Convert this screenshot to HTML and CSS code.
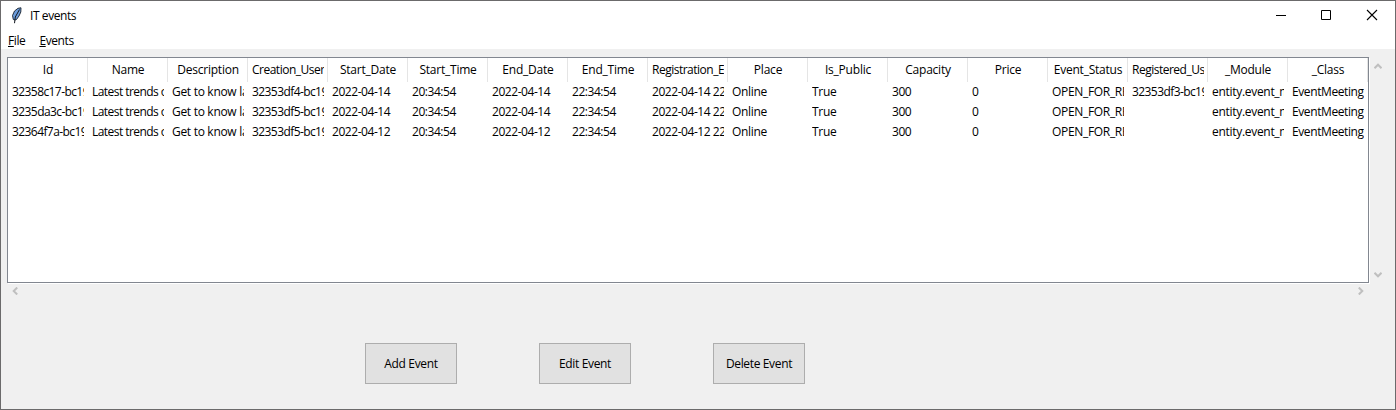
FILE: index.html
```html
<!DOCTYPE html>
<html lang="en">
<head>
<meta charset="utf-8">
<title>IT events</title>
<link rel="stylesheet" href="styles.css">
</head>
<body>
<div class="window">
  <header class="titlebar">
    <svg class="feather" width="12" height="18" viewBox="0 0 12 18"><path d="M2.3 12.5L1.5 8.5 3.5 4 7 1.3 10 .8 9.8 5 8 9 5.5 12.5 4 13z" fill="#6c9cdb" stroke="#19212c" stroke-width=".9"/><path d="M3.5 16.2L4.3 10 8.5 2.5" fill="none" stroke="#10151d" stroke-width="1"/></svg>
    <span class="title">IT events</span>
    <div class="controls">
      <svg width="46" height="29" viewBox="0 0 46 29"><path d="M19 14.5h10" stroke="#000"/></svg>
      <svg width="46" height="29" viewBox="0 0 46 29"><path d="M18.5 9.5h9v9h-9z" fill="none" stroke="#000"/></svg>
      <svg width="46" height="29" viewBox="0 0 46 29"><path d="M18 9l10 10M28 9L18 19" stroke="#000" stroke-width="1.1"/></svg>
    </div>
  </header>
  <nav class="menubar"><span class="file"><u>F</u>ile</span><span class="events"><u>E</u>vents</span></nav>
  <main class="content">
    <div class="tree-area">
      <div class="tree">
        <div class="row head"><span>Id</span><span>Name</span><span>Description</span><span class="long">Creation_User</span><span>Start_Date</span><span>Start_Time</span><span>End_Date</span><span>End_Time</span><span class="long">Registration_End</span><span>Place</span><span>Is_Public</span><span>Capacity</span><span>Price</span><span>Event_Status</span><span class="long">Registered_Users</span><span>_Module</span><span>_Class</span></div>
        <div class="row"><span class="id">32358c17-bc19</span><span class="name">Latest trends on</span><span>Get to know latest</span><span class="id">32353df4-bc19</span><span class="num">2022-04-14</span><span class="num">20:34:54</span><span class="num">2022-04-14</span><span class="num">22:34:54</span><span class="num">2022-04-14 22:34</span><span>Online</span><span>True</span><span class="num">300</span><span>0</span><span class="caps">OPEN_FOR_REG</span><span class="id">32353df3-bc19</span><span>entity.event_meeting</span><span class="cls">EventMeeting</span></div>
        <div class="row"><span class="id">3235da3c-bc19</span><span class="name">Latest trends on</span><span>Get to know latest</span><span class="id">32353df5-bc19</span><span class="num">2022-04-14</span><span class="num">20:34:54</span><span class="num">2022-04-14</span><span class="num">22:34:54</span><span class="num">2022-04-14 22:34</span><span>Online</span><span>True</span><span class="num">300</span><span>0</span><span class="caps">OPEN_FOR_REG</span><span></span><span>entity.event_meeting</span><span class="cls">EventMeeting</span></div>
        <div class="row"><span class="id">32364f7a-bc19</span><span class="name">Latest trends on</span><span>Get to know latest</span><span class="id">32353df5-bc19</span><span class="num">2022-04-12</span><span class="num">20:34:54</span><span class="num">2022-04-12</span><span class="num">22:34:54</span><span class="num">2022-04-12 22:34</span><span>Online</span><span>True</span><span class="num">300</span><span>0</span><span class="caps">OPEN_FOR_REG</span><span></span><span>entity.event_meeting</span><span class="cls">EventMeeting</span></div>
      </div>
      <div class="scroll vertical">
        <svg width="8" height="6" viewBox="0 0 8 6"><path d="M.5 5.2L4 1.7 7.5 5.2"/></svg>
        <svg width="8" height="6" viewBox="0 0 8 6"><path d="M.5 .8L4 4.3 7.5 .8"/></svg>
      </div>
      <div class="scroll horizontal">
        <svg width="6" height="8" viewBox="0 0 6 8"><path d="M5.2 .5L1.7 4 5.2 7.5"/></svg>
        <svg width="6" height="8" viewBox="0 0 6 8"><path d="M.8 .5L4.3 4 .8 7.5"/></svg>
      </div>
    </div>
    <div class="actions"><button class="add">Add Event</button><button class="edit">Edit Event</button><button class="delete">Delete Event</button></div>
  </main>
</div>
</body>
</html>
```
FILE: styles.css
```css
* { box-sizing: border-box; }
body { margin: 0; font: 12px/20px "Open Sans", "Noto Sans", sans-serif; color: #000; letter-spacing: -0.3px; }
.window { width: 1396px; height: 410px; border: 1px solid #6b6a6b; background: #f0f0f0; overflow: hidden; }
.titlebar { height: 29px; background: #fff; display: flex; align-items: center; padding-left: 10px; }
.feather { margin-right: 7px; }
.title { letter-spacing: -0.42px; }
.controls { margin-left: auto; display: flex; }
.controls svg, .scroll svg { display: block; }
.menubar { height: 19px; background: #fff; display: flex; gap: 14px; padding-left: 7px; line-height: 22px; letter-spacing: -0.4px; }
.menubar u { text-underline-offset: 1px; }
.content { padding: 8px 6px 0; }
.tree-area { display: grid; grid-template-columns: 1362px 16px; grid-template-rows: 226px 17px; }
.tree { border: 1px solid #828790; background: #fff; box-shadow: 1px 1px 0 #fff; }
.row { display: grid; grid-template-columns: repeat(17, 80px); height: 20px; }
.row span { margin: 0 4px; overflow: hidden; white-space: nowrap; height: 20px; }
.row.head { height: 24px; }
.row.head span { margin: 0; height: 24px; line-height: 24px; text-align: center; border: solid #fff; border-width: 0 3px 0 4px; box-shadow: 1px 0 0 #e5e5e5; width: 79px; letter-spacing: -0.22px; }
.row.head .long { letter-spacing: -0.5px; }
.row .id { letter-spacing: -0.58px; }
.row .name { letter-spacing: -0.55px; }
.row .num { letter-spacing: -0.45px; }
.row .caps { letter-spacing: -0.32px; }
.row .cls { letter-spacing: -0.4px; }
.scroll { display: flex; justify-content: space-between; }
.scroll path { fill: none; stroke: #bfbfbf; stroke-width: 2; }
.vertical { flex-direction: column; padding: 6px 0 5px 5px; }
.horizontal { align-items: center; padding: 0 5px 1px 5px; }
.actions { display: grid; grid-template-columns: repeat(3, 92px); gap: 82px; padding: 43px 0 0 358px; }
button { height: 41px; padding: 0; border: 1px solid #adadad; background: #e1e1e1; font: inherit; color: inherit; letter-spacing: -0.35px; white-space: nowrap; }
```
